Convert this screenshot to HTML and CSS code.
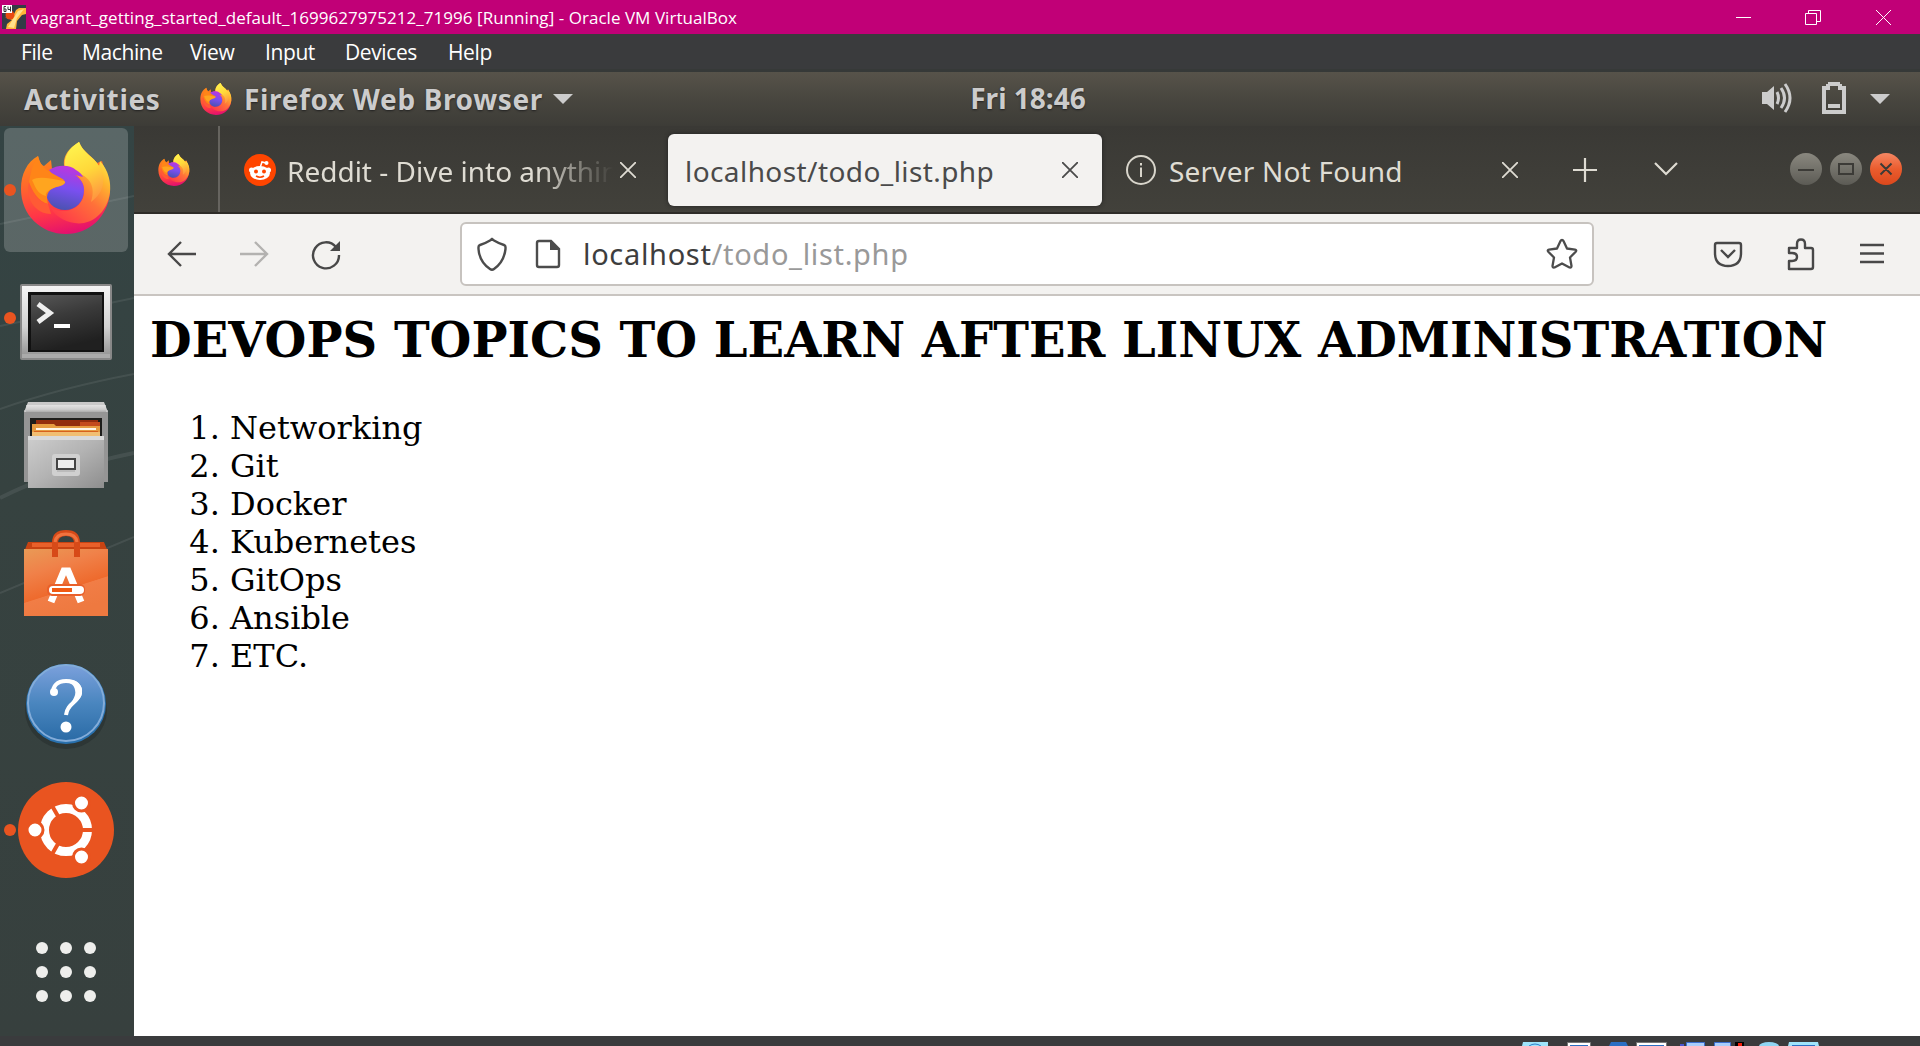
FILE: index.html
```html
<!DOCTYPE html>
<html lang="en">
<head>
<meta charset="utf-8">
<title>vagrant_getting_started_default_1699627975212_71996 [Running] - Oracle VM VirtualBox</title>
<link rel="stylesheet" href="styles.css">
</head>
<body>
<svg class="defs" width="0" height="0" aria-hidden="true">
  <defs>
    <linearGradient id="fxBody" x1=".85" y1=".1" x2=".3" y2="1"><stop offset="0" stop-color="#fff44f"/><stop offset=".3" stop-color="#ffb52e"/><stop offset=".6" stop-color="#ff7139"/><stop offset="1" stop-color="#ff3f47"/></linearGradient>
    <linearGradient id="fxFlame" x1=".3" y1="0" x2=".6" y2="1"><stop offset="0" stop-color="#fff44f"/><stop offset=".5" stop-color="#ffd93a"/><stop offset="1" stop-color="#ff9640"/></linearGradient>
    <linearGradient id="fxLeft" x1=".3" y1="0" x2=".5" y2="1"><stop offset="0" stop-color="#ff980e"/><stop offset=".4" stop-color="#ff6a2b"/><stop offset=".75" stop-color="#ff3647"/><stop offset="1" stop-color="#e3106f"/></linearGradient>
    <linearGradient id="fxGlobe" x1=".6" y1="0" x2=".4" y2="1"><stop offset="0" stop-color="#c035dd"/><stop offset=".5" stop-color="#7a4ff0"/><stop offset="1" stop-color="#4a52b0"/></linearGradient>
    <symbol id="firefox" viewBox="0 0 90 92">
      <path d="M17 14 C19 20 20 23 23 24 L30 18 L31 27 C36 25 42 24 46 25 C43 15 49 6 58 0 C62 10 70 13 76 21 L81 19 C82 25 90 36 89 50 C87 75 68 92 45 92 C20 92 0 73 0 47 C0 32 6 20 17 14Z" fill="url(#fxLeft)"/>
      <path d="M44 27 C40 15 48 6 58 0 C62 11 72 14 78 24 L79 19 C88 29 90 41 89 50 C87 66 77 78 63 81 C50 83 36 77 30 66 C50 76 68 60 62 42 C58 34 52 29 44 27Z" fill="url(#fxBody)"/>
      <path d="M44 26 C42 15 48 6 58 0 C62 11 72 14 78 24 C85 36 84 50 70 60 C76 42 66 32 52 30Z" fill="url(#fxFlame)"/>
      <path d="M28 28 C36 23 48 22 55 28 C59 30 61 33 62 35 L54 33 C60 37 63 42 63 48 C63 60 55 68 44 68 C33 68 25 60 25 50 C25 42 29 38 36 38Z" fill="url(#fxGlobe)"/>
      <path d="M17 14 C18 24 28 30 38 35 C45 38 46 41 38 44 C28 47 24 51 27 62 C17 60 11 48 8 40 C10 30 12 20 17 14Z" fill="#ff8518"/>
      <path d="M11 38 C17 34 28 36 43 39 C46 40 43 44 35 45 C28 48 24 50 25 54 C16 52 14 44 11 38Z" fill="#ffa51f"/>
      <path d="M8 40 C10 48 16 60 27 62 L30 72 C14 72 4 56 8 40Z" fill="#ff5a35"/>
    </symbol>
    <linearGradient id="steel" x2="0" y2="1"><stop offset="0" stop-color="#f4f4f4"/><stop offset=".6" stop-color="#d2d2d2"/><stop offset="1" stop-color="#999"/></linearGradient>
    <linearGradient id="screen" x1="0" y1="0" x2=".3" y2="1"><stop offset="0" stop-color="#565656"/><stop offset=".45" stop-color="#3a3a3a"/><stop offset="1" stop-color="#202020"/></linearGradient>
    <linearGradient id="drawer" x1="0" y1="0" x2="1" y2="1"><stop offset="0" stop-color="#cecece"/><stop offset=".5" stop-color="#b3b3b3"/><stop offset="1" stop-color="#8e8e8e"/></linearGradient>
    <linearGradient id="bag" x1="0" y1="0" x2=".4" y2="1"><stop offset="0" stop-color="#e99a56"/><stop offset=".35" stop-color="#f08149"/><stop offset=".69" stop-color="#ee6a2d"/><stop offset=".7" stop-color="#f17d46"/><stop offset="1" stop-color="#ee7940"/></linearGradient>
    <linearGradient id="help" x2="0" y2="1"><stop offset="0" stop-color="#7ba0dc"/><stop offset=".5" stop-color="#4a86bf"/><stop offset="1" stop-color="#2a6ba6"/></linearGradient>
    <linearGradient id="btnGrey" x2="0" y2="1"><stop offset="0" stop-color="#8a887f"/><stop offset="1" stop-color="#5c5b55"/></linearGradient>
    <linearGradient id="btnRed" x2="0" y2="1"><stop offset="0" stop-color="#f58763"/><stop offset=".5" stop-color="#ea5c2e"/><stop offset="1" stop-color="#dc481c"/></linearGradient>
  </defs>
</svg>

<header class="titlebar">
  <svg class="vm-icon" width="24" height="24" viewBox="0 0 24 24"><path fill="#343b46" d="M0 0h24v24H0z"/><path d="M3 12c5 4 8 0 11-7l3-2h7v6l-4 1-5 6-1 8H4l1-5 5-4z" fill="#ffb638"/><path d="M6 22l5-8 5-8 6-2-7 9-3 10z" fill="#ffe08a"/><circle cx="8" cy="10" r="4.500" fill="#e84a12"/><path fill="#fff" d="M0 0h10v8H0z"/><path d="M4 1.500H2v5h2v-2.500H2M6 1.500v3h2.500M8.500 1.500v5" fill="none" stroke="#333"/></svg>
  <span class="title">vagrant_getting_started_default_1699627975212_71996 [Running] - Oracle VM VirtualBox</span>
  <svg class="caption-buttons" width="155" height="15" viewBox="0 0 155 15" fill="none" stroke="#fff"><path d="M0 7.500h15M69.500 3.500h11v11h-11zM72.500 3.500v-3h12v11h-4M140 0l15 15M155 0l-15 15"/></svg>
</header>
<nav class="menubar"><span class="m-file">File</span><span class="m-machine">Machine</span><span class="m-view">View</span><span class="m-input">Input</span><span class="m-devices">Devices</span><span class="m-help">Help</span></nav>

<div class="topbar">
  <div class="top-left">
    <span class="activities">Activities</span>
    <svg class="app-icon" width="32" height="32"><use href="#firefox"/></svg>
    <span class="app-name">Firefox Web Browser</span>
    <svg class="app-arrow" width="20" height="12" viewBox="0 0 20 12"><path d="M0 1h20L10 11z" fill="#ccc"/></svg>
  </div>
  <span class="clock">Fri 18:46</span>
  <svg class="status" width="128" height="32" viewBox="1762 82 128 32">
    <path d="M1762 92h5l7-6v24l-7-6h-5z" fill="#ccc"/>
    <path d="M1777 92q3 6 0 12M1781 88q7 10 0 20M1785 84q10 14 0 28" fill="none" stroke="#ccc" stroke-width="3"/>
    <path d="M1826 84h2v-2h12v2h2v2h4v28h-24V86h4zM1830 86v4h-4v20h16V90h-4v-4z" fill="#ccc" fill-rule="evenodd"/><path d="M1828 104h12v4h-12zM1870 94h20l-10 10z" fill="#ccc"/>
  </svg>
</div>

<div class="desktop">
  <aside class="dock">
    <svg class="wall" width="134" height="910" viewBox="0 126 134 910" fill="none" stroke="#fff" stroke-opacity=".08"><path stroke-width="2" d="M0 224L134 196M0 326L134 298M0 409Q60 388 134 374M0 593L134 537"/><path stroke-width="4" d="M0 498Q60 468 134 453"/></svg>
    <div class="launcher active"><svg width="124" height="124" viewBox="4 128 124 124"><circle cx="10" cy="190" r="6" fill="#e95420"/><use href="#firefox" x="21" y="142" width="90" height="92"/></svg></div>
    <div class="launcher"><svg width="124" height="124" viewBox="4 256 124 124">
      <circle cx="10" cy="318" r="6" fill="#e95420"/><rect x="20" y="284" width="92" height="76" rx="2" fill="#888"/><rect x="22" y="286" width="88" height="68" fill="url(#steel)"/><path fill="#aaa" d="M22 354h88v4H22z"/><path fill="#111" d="M28 292h76v60H28z"/><path fill="url(#screen)" d="M31 295h71v55H31z"/><path d="M38 304l12 9-12 9" fill="none" stroke="#eee" stroke-width="5"/><path fill="#fff" d="M54 324h16v4H54z"/></svg></div>
    <div class="launcher"><svg width="124" height="124" viewBox="4 384 124 124">
      <path fill="#959595" d="M24 410h84v72H24z"/><path fill="#c9c9c9" d="M28 402h76l4 10H24z"/><path fill="url(#steel)" d="M26 405h80v7H26z" opacity=".6"/><path fill="#1d1d1b" d="M30 418h72v20H30z"/><path fill="#932d0e" d="M36 420h62v6H36z"/><path fill="#c44b1d" d="M80 422h20v5H80z"/><path fill="#e69c42" d="M32 424h22l2 2h44v10H32z"/><path fill="#fff5e9" d="M36 428h60v2H36z"/><path fill="#d7611e" d="M34 431h64v1H34z"/><path fill="#f1be72" d="M32 432h68v5H32z"/><path fill="url(#drawer)" d="M28 436h76v52H28z"/><path fill="#dadada" d="M28 436h76v4H28z"/><rect x="52" y="454" width="28" height="22" rx="3" fill="#d0d0d0"/><path fill="#444" d="M56 458h20v12H56z"/><path fill="#eee" d="M58 460h16v8H58z"/><path fill="#bbb" d="M57 470h18v2H57z"/></svg></div>
    <div class="launcher"><svg width="124" height="124" viewBox="4 512 124 124">
      <path fill="#c84312" d="M28 542h76l4 10H24z"/><path fill="#e9602a" d="M32 543h68v4H32z"/><path fill="url(#bag)" d="M24 549h84v67H24z"/><path d="M55 557v-14q0-10 11-10t11 10v14" fill="none" stroke="#d74a18" stroke-width="6"/><path d="M55 542q1-8 11-8t11 8" fill="none" stroke="#f0733f" stroke-width="3"/><path d="M51 602l13-31h4l13 31" fill="none" stroke="#fff" stroke-width="7"/><rect x="47" y="584" width="38" height="12" rx="5" fill="#e9602a"/><rect x="49" y="586" width="35" height="8" rx="4" fill="#fff"/><path fill="#f15a12" d="M52 588h20v4H52z"/></svg></div>
    <div class="launcher"><svg width="124" height="124" viewBox="4 640 124 124">
      <ellipse cx="66" cy="710" rx="41" ry="39" fill="#2d3635"/><circle cx="66" cy="704" r="40" fill="#2870ad"/><circle cx="66" cy="703" r="38" fill="url(#help)" stroke="#83acd9" stroke-width="2"/><path d="M54 692c-2-5 3-11 12-11 10 0 15 5 14 12-1 9-13 10-14 22" fill="none" stroke="#fff" stroke-width="4"/><path d="M66 680c10-2 17 5 16 13-1 7-9 11-14 17 2-8 9-13 7-20-1-5-4-7-9-8z" fill="#fff"/><circle cx="54" cy="692" r="4" fill="#fff"/><circle cx="66" cy="727" r="5.500" fill="#fff"/></svg></div>
    <div class="launcher"><svg width="124" height="124" viewBox="4 768 124 124">
      <circle cx="10" cy="830" r="6" fill="#e95420"/><circle cx="66" cy="830" r="48" fill="#e95420"/><circle cx="66" cy="830" r="21.500" fill="none" stroke="#fff" stroke-width="9"/><path d="M66 830h30M66 830l-15-26M66 830l-15 26" stroke="#e95420" stroke-width="4"/><circle cx="66" cy="830" r="16" fill="#e95420"/><g fill="#fff" stroke="#e95420" stroke-width="3"><circle cx="35" cy="830" r="8"/><circle cx="81.500" cy="803" r="8"/><circle cx="81.500" cy="857" r="8"/></g></svg></div>
    <svg class="apps" width="60" height="60" viewBox="36 942 60 60" fill="#eeeeec"><circle cx="42" cy="948" r="6"/><circle cx="66" cy="948" r="6"/><circle cx="90" cy="948" r="6"/><circle cx="42" cy="972" r="6"/><circle cx="66" cy="972" r="6"/><circle cx="90" cy="972" r="6"/><circle cx="42" cy="996" r="6"/><circle cx="66" cy="996" r="6"/><circle cx="90" cy="996" r="6"/></svg>
  </aside>

  <main class="browser">
    <div class="tabs">
      <div class="pinned"><svg width="32" height="32"><use href="#firefox"/></svg></div>
      <div class="tab reddit">
        <svg width="32" height="32" viewBox="0 0 32 32"><circle cx="16" cy="16" r="16" fill="#ff4500"/><path d="M16 14l2-6 4 1" fill="none" stroke="#fff" stroke-width="1.500"/><circle cx="22.500" cy="9" r="2" fill="#fff"/><circle cx="7.500" cy="16" r="2.500" fill="#fff"/><circle cx="24.500" cy="16" r="2.500" fill="#fff"/><ellipse cx="16" cy="19" rx="10" ry="7" fill="#fff"/><circle cx="12" cy="17.500" r="2" fill="#ff4500"/><circle cx="20" cy="17.500" r="2" fill="#ff4500"/><path d="M12 22q4 2.500 8 0" stroke="#ff4500" fill="none" stroke-width="1.500"/></svg>
        <span class="label fade">Reddit - Dive into anything</span>
        <svg class="x" width="16" height="16" viewBox="0 0 16 16"><path d="M0 0l16 16M16 0L0 16"/></svg>
      </div>
      <div class="tab current"><span class="label">localhost/todo_list.php</span><svg class="x" width="16" height="16" viewBox="0 0 16 16"><path d="M0 0l16 16M16 0L0 16"/></svg></div>
      <div class="tab server">
        <svg width="30" height="30" viewBox="0 0 30 30" fill="none" stroke="#d8d5cb" stroke-width="2"><circle cx="15" cy="15" r="14"/><path d="M15 12.500V22M15 8v2.500"/></svg>
        <span class="label">Server Not Found</span><svg class="x" width="16" height="16" viewBox="0 0 16 16"><path d="M0 0l16 16M16 0L0 16"/></svg>
      </div>
      <svg class="tab-tools" width="106" height="24" viewBox="0 0 106 24" fill="none" stroke="#dedbd2" stroke-width="2.200"><path d="M0 12h24M12 0v24M82 5l11 11 11-11"/></svg>
      <svg class="win-buttons" width="114" height="34" viewBox="1789 153 114 34"><circle cx="1806" cy="170" r="16" fill="url(#btnGrey)"/><circle cx="1846" cy="170" r="16" fill="url(#btnGrey)"/><circle cx="1886" cy="170" r="16" fill="url(#btnRed)"/><path d="M1798 171h16M1839 165h14v10h-14zM1880.500 164.500l11 11M1891.500 164.500l-11 11" fill="none" stroke="#3c3b37" stroke-width="2"/></svg>
    </div>
    <div class="toolbar">
      <svg class="nav-icons" width="174" height="32" viewBox="167 239 174 32" fill="none" stroke="#484848" stroke-width="2.400"><path d="M196 255h-27M181 243l-12 12 12 12"/><path d="M240 255h27M255 243l12 12-12 12" stroke="#b3b2b0"/><path d="M336 248A13 13 0 1 0 339 256"/><path d="M340 242v10h-10z" fill="#484848" stroke="none"/></svg>
      <div class="urlbar">
        <svg width="84" height="34" viewBox="477 237 84 34" fill="none" stroke="#4c4c4c" stroke-width="2.400"><path d="M492 239l-2 1.500q-5 3-10 4.500-1.500.5-1.500 2v2q1 13 11.500 20 2 1.500 4 0Q504 262 505.500 249v-2q0-1.500-1.500-2-5-1.500-10-4.500z"/><path d="M539 241h12l8 8v16q0 2-2 2h-18q-2 0-2-2v-22q0-2 2-2z"/><path d="M550 240v10h10z" fill="#4c4c4c" stroke="none"/></svg>
        <span class="url">localhost<span class="path">/todo_list.php</span></span>
        <svg class="star" width="32" height="32" viewBox="0 0 32 32"><path d="M16 2q1 0 1.500 1l3.500 7.500 8 1.200q2 .5.700 2L24 19.500l1.500 8.500q0 2-2 1.500L16 25.500 8.500 29.500q-2 .500-2-1.500L8 19.500 2.300 13.700q-1.300-1.500.7-2l8-1.200L14.500 3q.5-1 1.500-1z" fill="none" stroke="#4c4c4c" stroke-width="2.300" stroke-linejoin="round"/></svg>
      </div>
      <svg class="tool-icons" width="172" height="34" viewBox="1713 237 172 34" fill="none" stroke="#484848" stroke-width="2.400"><path d="M1717 243h22q2 0 2 2v8q0 13-13 13t-13-13v-8q0-2 2-2zM1721 250l7 7 7-7"/><path d="M1789 248h8v-4q0-4.500 4-4.500t4 4.500v4h6q2 0 2 2v17q0 2-2 2h-22v-8h3q5 0 5-4t-5-4h-3z" stroke-linejoin="round"/><path d="M1860 245h24M1860 253.500h24M1860 262h24"/></svg>
    </div>
    <article class="page">
      <h2>DEVOPS TOPICS TO LEARN AFTER LINUX ADMINISTRATION</h2>
      <ol><li>Networking</li><li>Git</li><li>Docker</li><li>Kubernetes</li><li>GitOps</li><li>Ansible</li><li>ETC.</li></ol>
    </article>
  </main>
</div>
<footer class="statusbar">
  <svg width="298" height="4" viewBox="1522 1042 298 4">
    <path fill="#9fe4fb" d="M1523 1042h25v4h-26zM1789 1042h29l1 4h-31z"/><path d="M1529 1046q6-4 12 0" stroke="#2b7ec9" fill="none"/><path fill="#fff" stroke="#777" d="M1567.500 1042.500h23v5h-23zM1636.500 1042.500h30v5h-30z"/><path fill="#2a6fc4" d="M1570 1045h18v1h-18zM1639 1045h25v1h-25zM1611 1042h15l2 4h-19zM1792 1045h23v1h-23z"/><path fill="#a9cdfb" stroke="#3b6fd0" d="M1686.500 1042.500h18v5h-18zM1714.500 1042.500h16v5h-16z"/><path fill="#4b55d0" d="M1680 1044h4v2h-4z"/><path fill="#000" d="M1735 1042h9v4h-9z"/><path fill="#f21f0c" d="M1738 1043h4v3h-4z"/><ellipse cx="1769" cy="1046" rx="10" ry="4" fill="#8fd5f3"/>
  </svg>
</footer>
</body>
</html>
```
FILE: styles.css
```css
* { box-sizing: border-box; }
body { margin: 0; width: 1920px; height: 1046px; overflow: hidden; display: flex; flex-direction: column; font-family: "Noto Sans", sans-serif; background: #3a3b3d; }
svg { display: block; flex: none; }
.defs { position: absolute; }
span { white-space: nowrap; }

.titlebar { height: 34px; flex: none; display: flex; align-items: center; background: #c10077; color: #fff; padding: 0 29px 0 2px; }
.vm-icon { margin-right: 5px; }
.title { font: 17px/34px "Open Sans", sans-serif; letter-spacing: 0.04px; padding-top: 1px; }
.caption-buttons { margin-left: auto; }

.menubar { height: 38px; flex: none; display: flex; padding-left: 21px; background: #3a3b3d; border-bottom: 3px solid #363938; color: #fff; font: 21px/36px "Open Sans", sans-serif; letter-spacing: -0.4px; }
.m-file { width: 61px; }
.m-machine { width: 108px; }
.m-view { width: 75px; }
.m-input { width: 80px; }
.m-devices { width: 103px; }

.topbar { height: 54px; flex: none; display: grid; grid-template-columns: 1fr auto 1fr; align-items: center; background: linear-gradient(#57534a, #48463f 50%, #3d3c37); color: #ccc; font-weight: 700; font-size: 28px; line-height: 54px; padding: 0 30px 0 24px; text-shadow: 0 1px 2px #222; }
.top-left { display: flex; align-items: center; }
.activities { width: 176px; letter-spacing: 0.65px; }
.app-icon { margin-right: 12px; }
.app-name { width: 309px; letter-spacing: 0.65px; }
.clock { position: relative; left: 71px; top: -1px; }
.status { justify-self: end; margin-top: -2px; }

.desktop { height: 910px; flex: none; display: flex; }
.dock { width: 134px; padding: 2px 4px 0; display: flex; flex-direction: column; gap: 4px; background: linear-gradient(#344444, #364240 40%, #37403e); position: relative; }
.wall { position: absolute; left: 0; top: 0; }
.launcher { width: 124px; height: 124px; border-radius: 6px; position: relative; }
.launcher.active { background: rgba(255, 255, 255, .19); }
.apps { margin: 46px 0 0 32px; }

.browser { flex: 1; background: #fff; min-width: 0; }
.tabs { height: 88px; display: flex; align-items: center; background: linear-gradient(#3a3935, #42413b); border-bottom: 2px solid #2e2c28; color: #dfdcd3; font-size: 28px; }
.pinned { width: 86px; height: 86px; padding: 28px 0 0 24px; border-right: 2px solid #66645f; }
.tab { display: flex; align-items: center; height: 72px; margin-top: 2px; }
.tab > svg { margin-top: -1px; }
.x { fill: none; stroke: currentColor; stroke-width: 1.8; }
.tab .label { line-height: 74px; height: 72px; }
.reddit { width: 448px; padding-left: 24px; }
.reddit .label { width: 333px; margin: 0 0 0 11px; overflow: hidden; }
.fade { mask-image: linear-gradient(90deg, #000 75%, transparent 98%); }
.current { width: 434px; padding-left: 17px; background: #f3f2f0; color: #4a4a4a; border-radius: 6px; box-shadow: 0 0 4px #222; }
.current .label { width: 377px; letter-spacing: 0.42px; }
.server { width: 471px; padding-left: 24px; }
.server .label { width: 333px; margin-left: 13px; letter-spacing: 0.2px; }
.tab-tools { margin-top: 2px; }
.win-buttons { margin-left: auto; margin-right: 17px; }

.toolbar { height: 82px; display: flex; align-items: center; background: #f3f2f0; border-bottom: 2px solid #c9c5c1; padding: 0 35px 0 33px; }
.urlbar { width: 1134px; height: 64px; margin-left: 119px; display: flex; align-items: center; padding: 0 14px 0 15px; background: #fff; border: 2px solid #c7c3bf; border-radius: 6px; }
.url { margin-left: 22px; font-size: 29px; letter-spacing: 0.67px; line-height: 58px; color: #3e3e3e; }
.path { color: #999; }
.star { margin-left: auto; }
.tool-icons { margin-left: auto; }

.page { padding: 16px; font-family: "DejaVu Serif", serif; font-size: 32px; color: #000; }
.page h2 { margin: 0; font-size: 48px; line-height: 56px; white-space: nowrap; }
.page ol { margin: 41px 0 0; padding-left: 80px; line-height: 38px; }
.statusbar { height: 10px; flex: none; padding: 6px 0 0 1522px; background: #3a3b3d; }
```
